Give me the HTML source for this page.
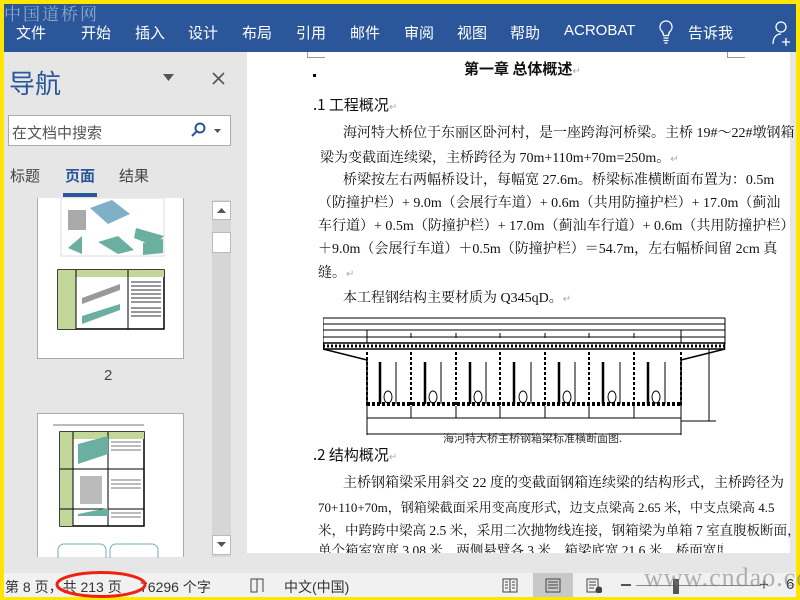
<!DOCTYPE html>
<html><head><meta charset="utf-8"><style>
*{margin:0;padding:0;box-sizing:border-box}
body{width:800px;height:600px;overflow:hidden;background:#ffe600;position:relative;font-family:"Liberation Sans","Noto Sans CJK SC",sans-serif}
.a{position:absolute;white-space:nowrap}
#rib{position:absolute;left:4px;top:4px;width:792px;height:48px;background:#2b579a}
#rib span{position:absolute;top:18px;color:#fff;font-size:15px}
#nav{position:absolute;left:4px;top:52px;width:243px;height:521px;background:#e6e6e6}
#doc{position:absolute;left:247px;top:52px;width:549px;height:501px;background:#fff}
#gray{position:absolute;left:247px;top:553px;width:549px;height:20px;background:#e6e6e6}
#stat{position:absolute;left:4px;top:573px;width:792px;height:24px;background:#f1f1f1;font-size:14px;color:#333}
.t{position:absolute;font-family:"Liberation Serif","Noto Serif CJK SC","Noto Sans CJK SC",serif;font-size:14px;color:#111;white-space:nowrap}
.j{width:412px;text-align:justify;text-align-last:justify}
</style></head><body>
<div class="a" style="left:4px;top:0;font-size:17px;color:#8fa8c8;font-family:'Noto Serif CJK SC',serif;letter-spacing:2px;z-index:3">中国道桥网</div>
<div id="rib">
<span style="left:12px">文件</span><span style="left:77px">开始</span><span style="left:131px">插入</span><span style="left:184px">设计</span><span style="left:238px">布局</span><span style="left:292px">引用</span><span style="left:346px">邮件</span><span style="left:400px">审阅</span><span style="left:453px">视图</span><span style="left:506px">帮助</span><span style="left:560px">ACROBAT</span>
<svg style="position:absolute;left:654px;top:16px" width="16" height="24" viewBox="0 0 16 24" fill="none" stroke="#fff" stroke-width="1.3"><path d="M8 1a6 6 0 0 0-4 10.5c1 1 1.5 2 1.5 4h5c0-2 .5-3 1.5-4A6 6 0 0 0 8 1z"/><path d="M5.5 18h5M5.5 20.5h5M6.5 23h3"/></svg>
<span style="left:684px">告诉我</span>
<svg style="position:absolute;left:768px;top:16px" width="22" height="26" viewBox="0 0 22 26" fill="none" stroke="#fff" stroke-width="1.3"><circle cx="9" cy="7" r="5"/><path d="M1 24c0-6 3-10 8-10M14 18v8M10 22h8"/></svg>
</div>
<div id="nav">
<div class="a" style="left:5px;top:12px;font-size:26px;color:#2b579a">导航</div>
<svg class="a" style="left:159px;top:22px" width="12" height="8"><path d="M0 0h11l-5.5 7z" fill="#555"/></svg>
<svg class="a" style="left:208px;top:20px" width="13" height="13" stroke="#555" stroke-width="1.6"><path d="M1 1l11 11M12 1L1 12"/></svg>
<div class="a" style="left:4px;top:63px;width:223px;height:31px;background:#fff;border:1px solid #ababab"></div>
<div class="a" style="left:8px;top:70px;font-size:15px;color:#555">在文档中搜索</div>
<svg class="a" style="left:186px;top:70px" width="16" height="16" fill="none" stroke="#2b579a" stroke-width="2"><circle cx="10" cy="6" r="4.5"/><path d="M7 9l-5 5"/></svg>
<svg class="a" style="left:210px;top:77px" width="8" height="5"><path d="M0 0h7l-3.5 4z" fill="#555"/></svg>
<div class="a" style="left:6px;top:113px;font-size:15px;color:#444">标题</div>
<div class="a" style="left:61px;top:113px;font-size:15px;color:#2b579a;font-weight:bold">页面</div>
<div class="a" style="left:115px;top:113px;font-size:15px;color:#444">结果</div>
<div class="a" style="left:59px;top:141px;width:34px;height:4px;background:#2b579a"></div>
<div class="a" style="left:33px;top:146px;width:147px;height:161px;background:#fff;border:1px solid #aaa;border-top:none">
<svg width="145" height="160"><rect x="23" y="0" width="103" height="58" fill="none" stroke="#ddd"/><path d="M30 12h18v20H30z" fill="#aaa"/><path d="M52 10l22-8 18 14-22 10z" fill="#7fb0c8"/><path d="M98 30l28 8-10 10-20-8z" fill="#6aafa0"/><path d="M30 50l14-12v18z" fill="#6aafa0"/><path d="M60 44l20-6 16 14-16 4z" fill="#6aafa0"/><path d="M105 45l20-4v14l-20 2z" fill="#6aafa0"/><rect x="20" y="72" width="106" height="59" fill="none" stroke="#000" stroke-width="1.5"/><rect x="20" y="72" width="106" height="7" fill="#c4d79b"/><rect x="20" y="79" width="18" height="52" fill="#c4d79b"/><path d="M38 72v59M90 72v59" stroke="#000"/><path d="M44 100l38-14v6l-38 14z" fill="#999"/><path d="M44 118l38-12v6l-38 14z" fill="#6aafa0"/><path d="M93 84h30M93 88h30M93 92h30M93 96h30M93 100h30M93 104h30M93 110h30M93 114h30M93 118h30" stroke="#777" stroke-width="1.5"/></svg></div>
<div class="a" style="left:100px;top:315px;font-size:15px;color:#444">2</div>
<div class="a" style="left:33px;top:361px;width:147px;height:144px;background:#fff;border:1px solid #aaa;border-bottom:none">
<svg width="145" height="144"><path d="M15 11h91" stroke="#777"/><rect x="22" y="18" width="84" height="94" fill="none" stroke="#000" stroke-width="1.5"/><rect x="22" y="18" width="84" height="7" fill="#c4d79b"/><rect x="22" y="25" width="13" height="87" fill="#c4d79b"/><path d="M35 18v94M70 18v94M22 55h84M22 95h84" stroke="#000"/><path d="M40 30l30-8v18l-30 10z" fill="#6aafa0"/><rect x="42" y="62" width="22" height="28" fill="#bbb"/><path d="M40 102h30v-8l-30 6z" fill="#6aafa0"/><path d="M73 28h30M73 32h30M73 36h30M73 66h30M73 70h30M73 74h30M73 99h30M73 103h30" stroke="#777"/><rect x="20" y="130" width="48" height="20" rx="6" fill="none" stroke="#7ab"/><rect x="72" y="130" width="48" height="20" rx="6" fill="none" stroke="#7ab"/></svg></div>
<div class="a" style="left:208px;top:148px;width:19px;height:357px;background:#d6d6d6"></div>
<div class="a" style="left:208px;top:149px;width:19px;height:19px;background:#fff;border:1px solid #bbb"></div>
<svg class="a" style="left:213px;top:156px" width="10" height="6"><path d="M0 5h9L4.5 0z" fill="#555"/></svg>
<div class="a" style="left:208px;top:180px;width:19px;height:21px;background:#fff;border:1px solid #bbb"></div>
<div class="a" style="left:208px;top:483px;width:19px;height:20px;background:#fff;border:1px solid #bbb"></div>
<svg class="a" style="left:213px;top:490px" width="10" height="6"><path d="M0 0h9L4.5 5z" fill="#555"/></svg>
</div>
<div id="doc">
<div class="a" style="left:60px;top:0;width:1px;height:6px;background:#999"></div><div class="a" style="left:60px;top:5px;width:18px;height:1px;background:#999"></div>
<div class="a" style="left:480px;top:0;width:1px;height:6px;background:#999"></div><div class="a" style="left:480px;top:5px;width:18px;height:1px;background:#999"></div>
<div class="a" style="left:543px;top:0;width:6px;height:501px;background:#e6e6e6"></div>
</div>
<div class="t" style="left:464px;top:58px;font-size:15px;font-weight:bold;font-family:'Noto Sans CJK SC',sans-serif">第一章 总体概述<span style="color:#aaa;font-weight:normal;font-size:10px">↵</span></div>
<div class="a" style="left:313px;top:74px;width:3px;height:3px;background:#000"></div>
<div class="t" style="left:313px;top:94px;font-size:15px;font-family:'Noto Sans CJK SC',sans-serif">.1 工程概况<span style="color:#aaa;font-size:10px">↵</span></div>
<div class="t j" style="left:343px;top:122px;width:387px">海河特大桥位于东丽区卧河村，是一座跨海河桥梁。主桥 19#～22#墩钢箱</div>
<div class="t" style="left:320px;top:147px">梁为变截面连续梁，主桥跨径为 70m+110m+70m=250m。<span style="color:#aaa;font-size:10px">↵</span></div>
<div class="t j" style="left:343px;top:169px;width:387px">桥梁按左右两幅桥设计，每幅宽 27.6m。桥梁标准横断面布置为：0.5m</div>
<div class="t j" style="left:318px;top:192px">（防撞护栏）+ 9.0m（会展行车道）+ 0.6m（共用防撞护栏）+ 17.0m（蓟汕</div>
<div class="t j" style="left:318px;top:215px">车行道）+ 0.5m（防撞护栏）+ 17.0m（蓟汕车行道）+ 0.6m（共用防撞护栏）</div>
<div class="t j" style="left:318px;top:238px">＋9.0m（会展行车道）＋0.5m（防撞护栏）＝54.7m，左右幅桥间留 2cm 真</div>
<div class="t" style="left:318px;top:262px">缝。<span style="color:#aaa;font-size:10px">↵</span></div>
<div class="t" style="left:343px;top:287px">本工程钢结构主要材质为 Q345qD。<span style="color:#aaa;font-size:10px">↵</span></div>
<svg class="a" style="left:323px;top:314px" width="410" height="122" fill="none" stroke="#000" stroke-width="1">
<path d="M0 4h402M0 10h402M0 4v26M402 4v26M0 16h402M0 23h402M44 16v8M88 19v5M133 19v5M177 19v5M222 19v5M266 19v5M311 19v5M358 16v8M44 23v6M358 23v6"/>
<rect x="0.5" y="29" width="401" height="6" stroke-width="1.5"/>
<path d="M0 32h402" stroke-width="3" stroke-dasharray="2 2"/>
<path d="M0 35l44 11M402 35l-44 11M44 46v46M358 46v46" stroke-width="1.5"/>
<path d="M44 90h314" stroke-width="4" stroke-dasharray="3 2"/>
<path d="M88 38v54M133 38v54M177 38v54M222 38v54M266 38v54M311 38v54M44 38v54M358 38v54" stroke-width="2" stroke-dasharray="3 2"/>
<path d="M57 48v42M102 48v42M147 48v42M191 48v42M236 48v42M280 48v42M325 48v42" stroke-width="2.5"/>
<path d="M73 48v42M118 48v42M163 48v42M208 48v42M252 48v42M297 48v42M342 48v42"/>
<ellipse cx="65" cy="83" rx="4" ry="6"/><ellipse cx="110" cy="83" rx="4" ry="6"/><ellipse cx="155" cy="83" rx="4" ry="6"/><ellipse cx="200" cy="83" rx="4" ry="6"/><ellipse cx="244" cy="83" rx="4" ry="6"/><ellipse cx="289" cy="83" rx="4" ry="6"/><ellipse cx="333" cy="83" rx="4" ry="6"/>
<path d="M44 92v29M358 92v29M88 92v12M133 92v12M177 92v12M222 92v12M266 92v12M311 92v12M44 104h314M44 120h314M358 35h35M358 107h35M386 35v72"/>
</svg>
<div class="t" style="left:443px;top:430px;font-size:11px;font-family:'Noto Sans CJK SC',sans-serif;color:#333">海河特大桥主桥钢箱梁标准横断面图.</div>
<div class="t" style="left:313px;top:444px;font-size:15px;font-family:'Noto Sans CJK SC',sans-serif">.2 结构概况<span style="color:#aaa;font-size:10px">↵</span></div>
<div class="t j" style="left:343px;top:472px;width:377px">主桥钢箱梁采用斜交 22 度的变截面钢箱连续梁的结构形式，主桥跨径为</div>
<div class="t j" style="left:318px;top:497px;width:418px;font-size:13px">70+110+70m，钢箱梁截面采用变高度形式，边支点梁高 2.65 米，中支点梁高 4.5</div>
<div class="t j" style="left:318px;top:519px;width:418px;font-size:13.5px">米，中跨跨中梁高 2.5 米，采用二次抛物线连接，钢箱梁为单箱 7 室直腹板断面，</div>
<div class="t j" style="left:318px;top:541px;width:405px;font-size:13.5px;height:12px;overflow:hidden;line-height:20px">单个箱室宽度 3.08 米，两侧悬臂各 3 米，箱梁底宽 21.6 米，桥面宽度 27.59</div>
<div id="gray"></div>
<div id="stat">
<div class="a" style="left:1px;top:4px">第 8 页，共 213 页</div>
<div class="a" style="left:136px;top:4px">76296 个字</div>
<svg class="a" style="left:245px;top:5px" width="16" height="15" fill="none" stroke="#444"><path d="M2 1h6v13H2zM8 1h6v13"/></svg>
<div class="a" style="left:280px;top:4px">中文(中国)</div>
<svg class="a" style="left:498px;top:5px" width="16" height="15" fill="none" stroke="#444"><path d="M1 1h14v13H1zM8 1v13M3 4h3M3 7h3M3 10h3M10 4h3M10 7h3M10 10h3"/></svg>
<div class="a" style="left:529px;top:0;width:40px;height:24px;background:#c8c8c8"></div>
<svg class="a" style="left:541px;top:5px" width="16" height="15" fill="none" stroke="#444"><path d="M1 1h14v13H1zM3 4h10M3 7h10M3 10h10"/></svg>
<svg class="a" style="left:582px;top:5px" width="16" height="15" fill="none" stroke="#444"><path d="M1 1h11v13H1zM3 4h7M3 7h7M3 10h5"/><circle cx="13" cy="12" r="3" fill="#444"/></svg>
<div class="a" style="left:617px;top:11px;width:10px;height:2px;background:#555"></div>
<div class="a" style="left:632px;top:12px;width:125px;height:1px;background:#888"></div>
<div class="a" style="left:669px;top:6px;width:6px;height:15px;background:#555"></div>
<div class="a" style="left:755px;top:2px;font-size:17px;color:#555">+</div>
<div class="a" style="left:782px;top:3px;font-size:15px">6</div>
<div class="a" style="left:640px;top:-10px;font-size:26px;color:rgba(120,120,120,.55);font-family:'Liberation Serif',serif;letter-spacing:1px">www.cndao.com</div>
<svg class="a" style="left:50px;top:-3px" width="96" height="30"><ellipse cx="47" cy="14.5" rx="44" ry="12" fill="none" stroke="#e21" stroke-width="3"/></svg>
</div>
</body></html>
